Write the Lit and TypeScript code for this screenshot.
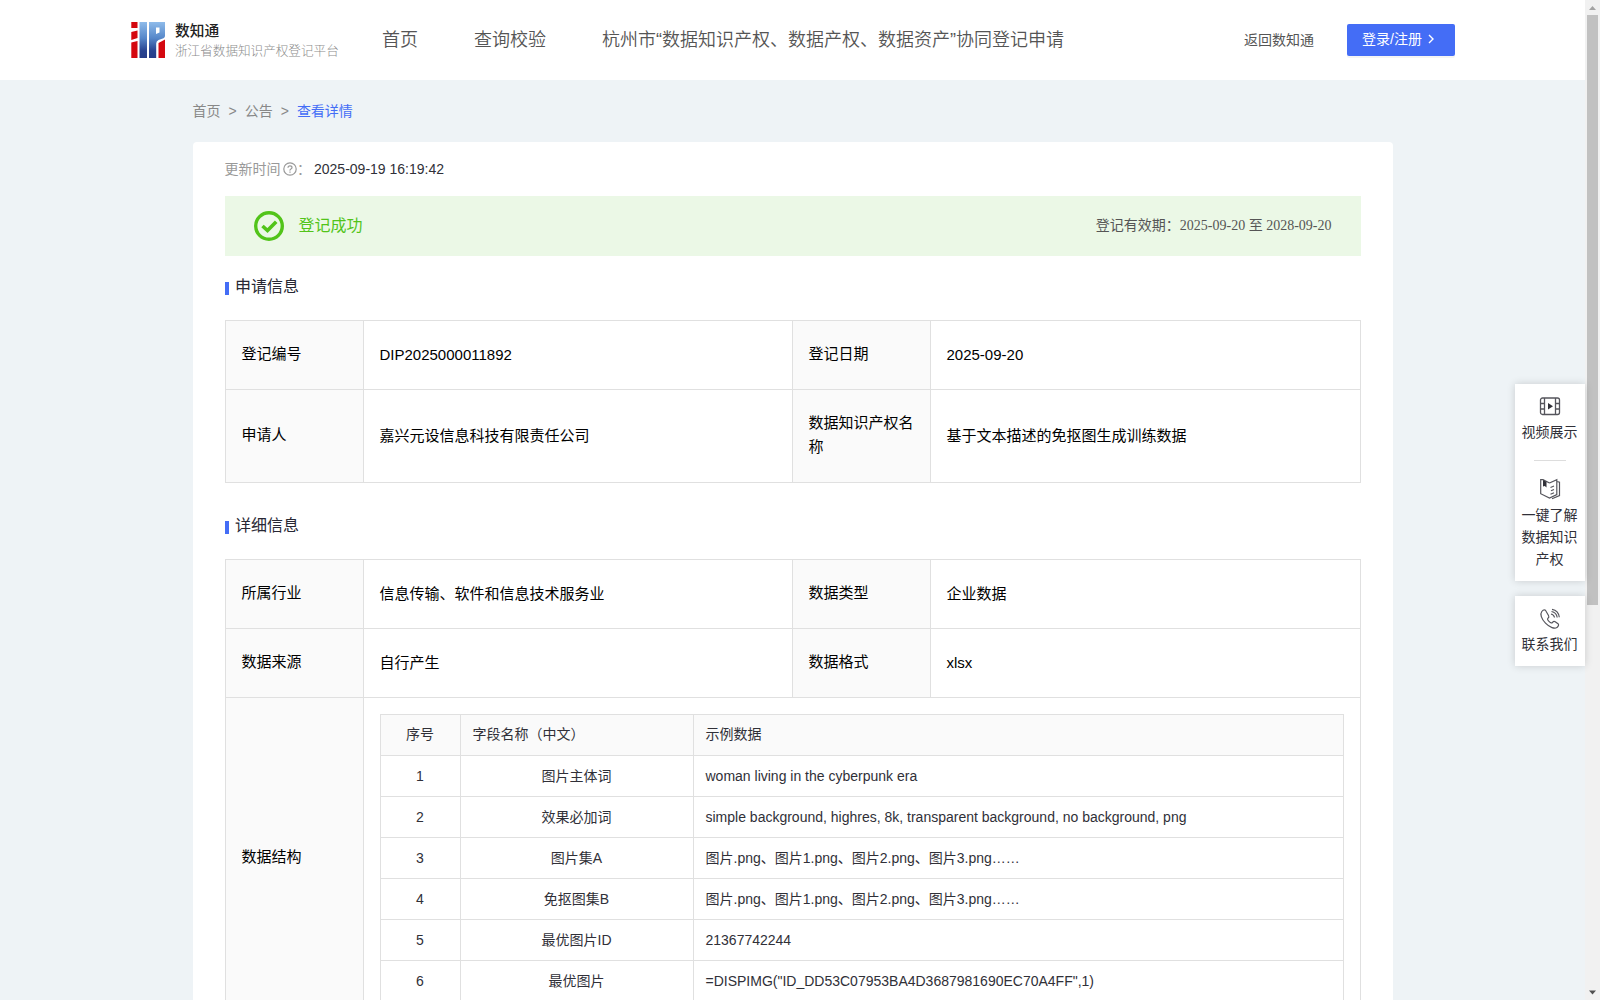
import { LitElement, html, css, svg } from "lit";
import { customElement } from "lit/decorators.js";

interface FieldRow {
  no: string;
  name: string;
  sample: string;
}

const FIELDS: FieldRow[] = [
  { no: "1", name: "图片主体词", sample: "woman living in the cyberpunk era" },
  { no: "2", name: "效果必加词", sample: "simple background, highres, 8k, transparent background, no background, png" },
  { no: "3", name: "图片集A", sample: "图片.png、图片1.png、图片2.png、图片3.png……" },
  { no: "4", name: "免抠图集B", sample: "图片.png、图片1.png、图片2.png、图片3.png……" },
  { no: "5", name: "最优图片ID", sample: "21367742244" },
  { no: "6", name: "最优图片", sample: '=DISPIMG("ID_DD53C07953BA4D3687981690EC70A4FF",1)' },
];

@customElement("site-header")
export class SiteHeader extends LitElement {
  static styles = css`
    :host { display: block; }
    .bar { height: 80px; background: #fff; display: flex; align-items: center; padding: 0 130px; box-sizing: border-box; color: #555; }
    .logo { display: block; width: 36px; height: 38px; }
    .brand { margin-left: 9px; width: 207px; white-space: nowrap; padding-top: 2px; }
    .name { font-size: 14.7px; line-height: 19px; font-weight: 500; color: #222; }
    .sub { font-size: 12.6px; line-height: 20px; color: #8c8c8c; font-weight: 300; }
    .nav { display: flex; gap: 56px; font-size: 18px; line-height: 24px; white-space: nowrap; flex: 1; font-weight: 350; }
    .back { font-size: 14px; line-height: 20px; white-space: nowrap; padding-bottom: 1px; }
    .login { margin-left: 33px; width: 108px; height: 32px; border-radius: 2px; background: #446df6; color: #fff; font-size: 14px; line-height: 30px; display: flex; align-items: center; padding: 0 0 2px 15px; box-sizing: border-box; box-shadow: 0 2px 0 rgba(0, 0, 0, 0.045); white-space: nowrap; }
    .arrow { margin-left: 3px; width: 12px; height: 12px; }
  `;
  render() {
    return html`<header class="bar">
      <svg class="logo" viewBox="0 0 36 38">
        <defs>
          <linearGradient id="blue" x1="0" y1="0" x2="0" y2="1">
            <stop offset="0" stop-color="#8ebbea" /><stop offset="0.45" stop-color="#5687c9" />
            <stop offset="0.8" stop-color="#284390" /><stop offset="1" stop-color="#263c88" />
          </linearGradient>
        </defs>
        <g fill="#d40810"><path d="M1.300 1h6.200v6H1.300zM1.300 11L7.500 9.500V17L1.300 19zM1.300 21.500L7.500 20V37H1.300zM28.500 22L35 18.500V37h-6.500z" /></g>
        <path fill="url(#blue)" d="M9.500 1H17v36H9.500zM19 1h16v14q0 1.500-1.500 2.200L28.500 19q-2.300 1-2.300 3.500V37H19z" />
        <path fill="#fff" d="M26 6.500h3.500v5L26 13z" />
      </svg>
      <div class="brand"><div class="name">数知通</div><div class="sub">浙江省数据知识产权登记平台</div></div>
      <nav class="nav"><span>首页</span><span>查询校验</span><span>杭州市“数据知识产权、数据产权、数据资产”协同登记申请</span></nav>
      <span class="back">返回数知通</span>
      <span class="login">登录/注册<svg class="arrow" viewBox="0 0 12 12"><path d="M4 2l4 4-4 4" fill="none" stroke="#fff" stroke-width="1.400" /></svg></span>
    </header>`;
  }
}

@customElement("field-table")
export class FieldTable extends LitElement {
  static styles = css`
    :host { display: block; }
    .table { border-top: 1px solid #e0e0e0; border-left: 1px solid #e0e0e0; font-size: 14px; line-height: 22px; color: #303038; }
    .row { display: grid; grid-template-columns: 80px 233px 1fr; height: 41px; }
    .cell { border-right: 1px solid #e0e0e0; border-bottom: 1px solid #e0e0e0; display: flex; align-items: center; justify-content: center; padding: 0 12px 0 11px; white-space: nowrap; }
    .start { justify-content: flex-start; padding-left: 11.5px; }
    .head { background: #fafafa; }
    .head .cell { padding-bottom: 2px; }
  `;
  render() {
    return html`<div class="table">
      <div class="row head"><div class="cell">序号</div><div class="cell start">字段名称（中文）</div><div class="cell start">示例数据</div></div>
      ${FIELDS.map((f) => html`<div class="row"><div class="cell">${f.no}</div><div class="cell">${f.name}</div><div class="cell start">${f.sample}</div></div>`)}
    </div>`;
  }
}

@customElement("side-tools")
export class SideTools extends LitElement {
  static styles = css`
    :host { display: block; }
    .panel { width: 70px; box-sizing: border-box; background: #fff; box-shadow: 0 0 8px rgba(0, 0, 0, 0.16); display: flex; flex-direction: column; align-items: center; font-size: 14px; line-height: 22px; color: #303038; text-align: center; }
    .tools { height: 197px; padding-top: 12px; }
    .contact { height: 70px; margin-top: 15px; padding-top: 12px; }
    .icon { width: 22px; height: 22px; display: block; }
    .label { width: 56px; margin: 3px 1px 0 0; }
    .about { margin-top: 4px; }
    .rule { width: 32px; height: 1px; background: #ddd; margin: 17px 0; }
  `;
  render() {
    return html`<div class="panel tools">
        <svg class="icon" viewBox="0 0 22 22" fill="none" stroke="#55555c" stroke-width="1.300">
          <rect x="1.500" y="2" width="19" height="16.500" rx="2" /><path d="M5.500 2v16.500M16.500 2v16.500M1.500 7.500h4M1.500 13h4M16.500 7.500h4M16.500 13h4" /><path d="M9 7l5 3.300-5 3.200z" fill="#303038" stroke="none" />
        </svg>
        <div class="label">视频展示</div>
        <div class="rule"></div>
        <svg class="icon" viewBox="0 0 22 22" fill="none" stroke="#55555c" stroke-width="1.200">
          <path d="M10.500 5L4 1.700H1.700v14L10.500 20l7.300-3.500V1.700L10.500 5M18 3.500l2.500.8V17.500L13 20.800" /><path d="M4 2l3.500 1.800v5.700L5.800 8 4 8.500z" fill="#303038" stroke="none" /><path d="M11.500 9.500l3.500-1.500M12 12.800l3-1.300M11.500 16.200l3.500-1.500" />
        </svg>
        <div class="label about">一键了解数据知识产权</div>
      </div>
      <div class="panel contact">
        <svg class="icon" viewBox="0 0 22 22" fill="none" stroke="#55555c" stroke-width="1.200">
          <path d="M6.500 2.300C5.500 1.500 4 2 2.800 3.500c-2 2.500-.5 7.300 3.700 11.700s9.300 6 11.500 4.200c1.700-1.300 2-2.700 1-3.700l-2.800-2c-1-.7-2-.2-2.700.7-.7 1-1.700.7-3.300-.8C8.500 12 8.200 11 9 10.200c1-.7 1.200-1.500.5-2.700z" /><path d="M12 6q3 .7 3.500 3.500M12.500 3.500q5 1 5.700 6M13 1.300q6.500 1 7.300 8" />
        </svg>
        <div class="label">联系我们</div>
      </div>`;
  }
}

@customElement("app-root")
export class AppRoot extends LitElement {
  static styles = css`
    :host { display: block; height: 1000px; overflow: hidden; position: relative; background: #eef3f6; font-family: "Liberation Sans", "Noto Sans CJK SC", sans-serif; font-weight: 400; }
    .frame { display: flex; height: 1000px; overflow: hidden; }
    .page { width: 1585px; height: 1000px; overflow: hidden; }
    .crumbs { display: flex; gap: 8px; margin: 20px 0 0 192.5px; height: 22px; font-size: 14px; line-height: 22px; color: #888; }
    .current { color: #446df6; }
    .card { width: 1200px; height: 1200px; margin: 20px 0 0 193px; padding: 0 32px; background: #fff; border-radius: 4px 4px 0 0; box-sizing: border-box; }
    .updated { display: flex; align-items: center; height: 54px; font-size: 14px; color: #999; box-sizing: border-box; padding-bottom: 1px; }
    .updated .text { margin-left: -0.5px; padding-bottom: 2px; }
    .help { width: 14px; height: 14px; margin: 0 0 0 2.5px; }
    .colon { width: 17px; padding-bottom: 1px; }
    .time { color: #303038; }
    .status { height: 60px; background: #ebf8e6; display: flex; align-items: center; padding: 0 29.5px 0 29px; }
    .check { width: 30px; height: 30px; }
    .result { margin-left: 14.5px; font-size: 16px; line-height: 24px; color: #52c41a; flex: 1; }
    .valid { font-family: "Liberation Serif", "Noto Sans CJK SC", serif; font-size: 14px; color: #555; padding-bottom: 5px; }
    .title { display: flex; align-items: center; height: 24px; font-size: 16px; line-height: 24px; color: #282834; }
    .title .text { padding-bottom: 1px; }
    .first { margin: 19px 0 21px; }
    .second { margin: 31px 0 21px; }
    .mark { width: 4px; height: 13px; margin: 3px 6px 0 0; background: #446df6; }
    .grid { display: grid; grid-template-columns: 138px 429px 138px 430px; border-top: 1px solid #e0e0e0; border-left: 1px solid #e0e0e0; font-size: 15px; line-height: 24px; color: #000; }
    .basic { grid-template-rows: 69px 93px; }
    .detail { grid-template-rows: 69px 69px 321px; }
    .cell { box-sizing: border-box; border-right: 1px solid #e0e0e0; border-bottom: 1px solid #e0e0e0; padding: 0 14px 1px 15.5px; display: flex; align-items: center; }
    .key { background: #fafafa; padding-bottom: 2px; }
    .wide { grid-column: 2 / 5; padding: 16px; display: block; }
    .side { position: absolute; right: 15px; top: 384px; }
    .scroll { width: 15px; height: 1000px; background: #f1f1f1; display: flex; flex-direction: column; align-items: center; }
    .tip { width: 15px; height: 15px; }
    .thumb { width: 11px; height: 590px; background: #c1c1c1; flex: none; }
    .space { flex: 1; }
  `;

  private pair(key: string, value: string) {
    return html`<div class="cell key">${key}</div><div class="cell">${value}</div>`;
  }

  private tip(path: string, color: string) {
    return html`<svg class="tip" viewBox="0 0 15 15">${svg`<path d=${path} fill=${color} />`}</svg>`;
  }

  render() {
    return html`
      <div class="frame">
        <div class="page">
          <site-header></site-header>
          <div class="crumbs"><span>首页</span><span>&gt;</span><span>公告</span><span>&gt;</span><span class="current">查看详情</span></div>
          <main class="card">
            <div class="updated"><span class="text">更新时间</span><svg class="help" viewBox="0 0 14 14" fill="none" stroke="#999" stroke-width="1.200"><circle cx="7" cy="7" r="6.200" /><path d="M5 5.700q0-1.900 2-1.900t2 1.700q0 1-1.100 1.500T7 8.600M7 9.600v1.200" /></svg><span class="colon">：</span><span class="time">2025-09-19 16:19:42</span></div>
            <div class="status">
              <svg class="check" viewBox="0 0 30 30" fill="none" stroke="#52c41a"><circle cx="15" cy="15" r="13.300" stroke-width="3.400" /><path d="M8.500 15l5 4.500 8.700-8.700" stroke-width="3.600" /></svg>
              <span class="result">登记成功</span>
              <span class="valid">登记有效期：2025-09-20 至 2028-09-20</span>
            </div>
            <div class="title first"><i class="mark"></i><span class="text">申请信息</span></div>
            <section class="grid basic">
              ${this.pair("登记编号", "DIP2025000011892")}${this.pair("登记日期", "2025-09-20")}
              ${this.pair("申请人", "嘉兴元设信息科技有限责任公司")}${this.pair("数据知识产权名称", "基于文本描述的免抠图生成训练数据")}
            </section>
            <div class="title second"><i class="mark"></i><span class="text">详细信息</span></div>
            <section class="grid detail">
              ${this.pair("所属行业", "信息传输、软件和信息技术服务业")}${this.pair("数据类型", "企业数据")}
              ${this.pair("数据来源", "自行产生")}${this.pair("数据格式", "xlsx")}
              <div class="cell key">数据结构</div>
              <div class="cell wide"><field-table></field-table></div>
            </section>
          </main>
        </div>
        <div class="scroll">${this.tip("M4 10l3.500-4L11 10z", "#a3a3a3")}<div class="thumb"></div><div class="space"></div>${this.tip("M4 5.500l3.500 4 3.500-4z", "#505050")}</div>
      </div>
      <side-tools class="side"></side-tools>
    `;
  }
}
